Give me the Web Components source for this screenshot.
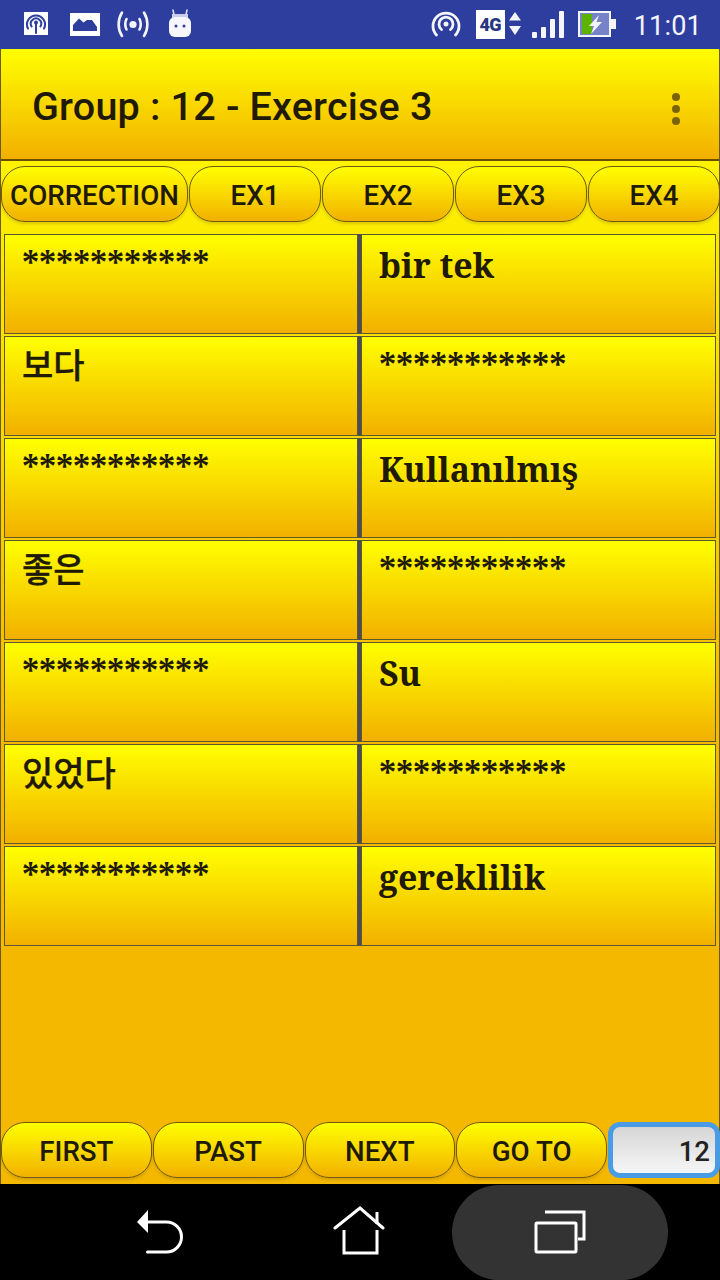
<!DOCTYPE html>
<html>
<head>
<meta charset="utf-8">
<title>Group 12 - Exercise 3</title>
<style>
  html, body { margin: 0; padding: 0; background: #000; }
  body { width: 720px; height: 1280px; overflow: hidden; font-family: Roboto, sans-serif; }
</style>
</head>
<body>
<phone-screen>
  <status-bar></status-bar>
  <app-bar title="Group : 12 - Exercise 3"></app-bar>
  <tab-row>
    <pill-button style="flex:none;width:187px">CORRECTION</pill-button>
    <pill-button>EX1</pill-button>
    <pill-button>EX2</pill-button>
    <pill-button>EX3</pill-button>
    <pill-button>EX4</pill-button>
  </tab-row>
  <word-table>
    <word-row left="***********" right="bir tek"></word-row>
    <word-row left="보다" right="***********"></word-row>
    <word-row left="***********" right="Kullanılmış"></word-row>
    <word-row left="좋은" right="***********"></word-row>
    <word-row left="***********" right="Su"></word-row>
    <word-row left="있었다" right="***********"></word-row>
    <word-row left="***********" right="gereklilik"></word-row>
  </word-table>
  <pager-row>
    <pill-button>FIRST</pill-button>
    <pill-button>PAST</pill-button>
    <pill-button>NEXT</pill-button>
    <pill-button>GO TO</pill-button>
    <page-input value="12"></page-input>
  </pager-row>
  <nav-bar></nav-bar>
</phone-screen>

<script>
class PhoneScreen extends HTMLElement {
  connectedCallback() {
    this.attachShadow({ mode: 'open' });
    this.shadowRoot.innerHTML = `
      <style>
        :host { display: flex; flex-direction: column; width: 720px; height: 1280px; }
        .content {
          flex: 1; display: flex; flex-direction: column; min-height: 0;
          border-left: 1px solid #6b5a10; border-right: 1px solid #6b5a10;
          background: linear-gradient(#ffff00 0, #f4b800 680px);
        }
      </style>
      <slot name="top"></slot>
      <div class="content"><slot></slot></div>
      <slot name="bottom"></slot>
    `;
    this.querySelector('status-bar').slot = 'top';
    this.querySelector('nav-bar').slot = 'bottom';
  }
}

class StatusBar extends HTMLElement {
  connectedCallback() {
    this.attachShadow({ mode: 'open' });
    this.shadowRoot.innerHTML = `
      <style>
        :host { display: block; height: 49px; background: #2d3e9f; color: #fff; flex: none; }
        .row { display: flex; align-items: center; height: 48px; }
        svg { display: block; flex: none; }
        .time { font: 400 27px Roboto, sans-serif; color: #f4f5fb; margin: 0 18px 0 18px; letter-spacing: .2px; line-height: 48px; position: relative; top: 2px; }
        .g { width: 29px; height: 29px; background: #fff; color: #27367f; display: flex; align-items: center; justify-content: center; font: 900 18px Roboto, sans-serif; letter-spacing: -.5px; }
      </style>
      <div class="row">
        <svg style="margin-left:24px" width="24" height="24" viewBox="0 0 24 24">
          <path fill="#fff" d="M0 0H24V23H0Z"/>
          <g fill="none" stroke="#2d3e9f" stroke-width="2" stroke-linecap="round">
            <path d="M4 16.500A9 9 0 1 1 20 16.500"/>
            <path d="M7.600 14.500A5.200 5.200 0 1 1 16.400 14.500"/>
            <path d="M12 11V21"/>
          </g>
          <circle cx="12" cy="10.500" r="2" fill="#2d3e9f"/>
        </svg>
        <svg style="margin-left:22px" width="30" height="24" viewBox="0 0 30 24">
          <path fill="#fff" d="M0 1H30V24H0Z"/>
          <path fill="#2d3e9f" d="M3 19V13L9 6.500L13.500 10.500L17 8L22 8L27 15V19Z"/>
        </svg>
        <svg style="margin-left:15px" width="36" height="28" viewBox="0 0 36 28">
          <g fill="none" stroke="#f4f5fb" stroke-width="2.600" stroke-linecap="round">
            <path d="M7 2.500C2.500 10 2.500 19 7 26"/>
            <path d="M11.500 9C9.800 12.500 9.800 16 11.500 19.500"/>
            <path d="M24.500 9C26.200 12.500 26.200 16 24.500 19.500"/>
            <path d="M29 2.500C33.500 10 33.500 19 29 26"/>
          </g>
          <circle cx="18" cy="14.500" r="3.600" fill="#f4f5fb"/>
        </svg>
        <svg style="margin-left:17px" width="24" height="30" viewBox="0 0 24 30">
          <path fill="none" stroke="#d8dbf0" stroke-width="1.600" stroke-linecap="round" d="M5 1L6.500 8M19 1L17.500 8"/>
          <path fill="#c9cdea" d="M4 5H20V10H4Z"/>
          <rect x="1" y="8" width="22" height="20" rx="6" fill="#f6f6fc"/>
          <circle cx="8" cy="17" r="1.500" fill="#2d3e9f"/>
          <circle cx="16" cy="17" r="1.500" fill="#2d3e9f"/>
        </svg>
        <div style="flex:1"></div>
        <svg width="30" height="30" viewBox="0 0 30 30" style="margin-right:15px">
          <g fill="none" stroke="#f4f5fb" stroke-width="2.800" stroke-linecap="round">
            <path d="M5.500 26A13 13 0 1 1 24.500 26"/>
            <path d="M10.500 20.500A7 7 0 1 1 19.500 20.500"/>
          </g>
          <circle cx="15" cy="15" r="2.500" fill="#f4f5fb"/>
        </svg>
        <div class="g">4G</div>
        <svg width="12" height="24" viewBox="0 0 12 24" style="margin:0 11px 0 4px">
          <path fill="#f4f5fb" d="M6 0L12 8.500H0Z"/><path fill="#f4f5fb" d="M0 14H12L6 23Z"/>
        </svg>
        <svg width="33" height="30" viewBox="0 0 33 30" style="margin-right:13px">
          <rect x="0" y="23" width="5" height="6" rx="1" fill="#f4f5fb"/>
          <rect x="9" y="18" width="5" height="11" rx="1" fill="#f4f5fb"/>
          <rect x="18" y="10" width="5" height="19" rx="1" fill="#f4f5fb"/>
          <rect x="27" y="2" width="5" height="27" rx="1" fill="#f4f5fb"/>
        </svg>
        <svg width="38" height="26" viewBox="0 0 38 26">
          <path fill="#f4f5fb" d="M0 0H33V8H38V18H33V26H0Z"/>
          <path fill="#7683c9" d="M2 2H31V24H2Z"/>
          <path fill="#5cb400" d="M4 3H14V23H4Z"/>
          <path fill="#f4f5fb" d="M21 4L11 15H16L13 23L24 11H18.500Z"/>
        </svg>
        <div class="time">11:01</div>
      </div>
    `;
  }
}

class AppBar extends HTMLElement {
  connectedCallback() {
    this.attachShadow({ mode: 'open' });
    this.shadowRoot.innerHTML = `
      <style>
        :host {
          display: flex; align-items: center; flex: none; box-sizing: border-box;
          height: 112px; padding: 4px 0 0 31px;
          background: linear-gradient(#ffff00, #f2b000);
          border-bottom: 2px solid #6b4e08;
          color: #201a05;
        }
        h1 { flex: 1; margin: 0; font: 500 39.500px Roboto, sans-serif; letter-spacing: .2px; }
        .dots { display: flex; flex-direction: column; gap: 4px; margin: 5px 39px 0 0; }
        .dots i { width: 8px; height: 8px; border-radius: 50%; background: #7a6405; }
      </style>
      <h1>${this.getAttribute('title')}</h1>
      <div class="dots"><i></i><i></i><i></i></div>
    `;
  }
}

class TabRow extends HTMLElement {
  connectedCallback() {
    this.attachShadow({ mode: 'open' });
    this.shadowRoot.innerHTML = `
      <style>
        :host { display: flex; flex: none; gap: 1px; padding: 5px 0 0 0; height: 57px; margin-right: -1px; }
        ::slotted(pill-button) { flex: 1 1 0; }
      </style>
      <slot></slot>
    `;
  }
}

class PillButton extends HTMLElement {
  connectedCallback() {
    this.attachShadow({ mode: 'open' });
    this.shadowRoot.innerHTML = `
      <style>
        :host {
          display: flex; align-items: center; justify-content: center; box-sizing: border-box;
          height: 56px; padding-top: 2px; border: 1px solid #6f5a10; border-radius: 24px;
          background: linear-gradient(#ffff00, #f2b000);
          font: 500 27.700px Roboto, sans-serif; color: #201a05;
          box-shadow: 0 2px 3px rgba(120, 90, 0, .25);
        }
      </style>
      <slot></slot>
    `;
  }
}

class WordTable extends HTMLElement {
  connectedCallback() {
    this.attachShadow({ mode: 'open' });
    this.shadowRoot.innerHTML = `
      <style>
        :host { display: flex; flex-direction: column; gap: 2px; padding: 11px 3px 0; flex: 1; }
      </style>
      <slot></slot>
    `;
  }
}

class WordRow extends HTMLElement {
  connectedCallback() {
    this.attachShadow({ mode: 'open' });
    const cell = text => {
      const korean = /[\uac00-\ud7a3]/.test(text);
      const stars = text[0] === '*';
      return `<div class="cell ${korean ? 'ko' : ''} ${stars ? 'stars' : ''}">${text}</div>`;
    };
    this.shadowRoot.innerHTML = `
      <style>
        :host { display: grid; grid-template-columns: 354px 355px; column-gap: 3px; height: 100px; background: #4a4a58; }
        .cell {
          box-sizing: border-box; height: 100px; padding: 7px 17px 0;
          border: 1px solid #5c5a2c;
          background: linear-gradient(#ffff00, #f2b000);
          color: #201a05;
          font: 700 33.900px/46px "Noto Serif", "Liberation Serif", serif;
          white-space: nowrap; overflow: hidden;
        }
        .cell.ko { font: 500 34px/46px "Noto Sans CJK KR", sans-serif; -webkit-text-stroke: .3px #201a05; padding-top: 4px; }
        .cell.stars { padding-top: 5px; }
      </style>
      ${cell(this.getAttribute('left'))}
      ${cell(this.getAttribute('right'))}
    `;
  }
}

class PagerRow extends HTMLElement {
  connectedCallback() {
    this.attachShadow({ mode: 'open' });
    this.shadowRoot.innerHTML = `
      <style>
        :host { display: flex; flex: none; gap: 1px; height: 62px; box-sizing: border-box; margin-right: -1px; }
        ::slotted(pill-button) { flex: none; width: 150.750px; }
      </style>
      <slot></slot>
    `;
  }
}

class PageInput extends HTMLElement {
  connectedCallback() {
    this.attachShadow({ mode: 'open' });
    this.shadowRoot.innerHTML = `
      <style>
        :host {
          display: flex; align-items: center; justify-content: flex-end; flex: none; box-sizing: border-box;
          width: 112px; height: 56px; padding: 2px 5px 0 0;
          border: 5px solid #4a9be6; border-radius: 12px;
          background: linear-gradient(#d6d6d6, #f6f6f6);
          font: 500 27.500px Roboto, sans-serif; color: #222;
        }
      </style>
      ${this.getAttribute('value')}
    `;
  }
}

class NavBar extends HTMLElement {
  connectedCallback() {
    this.attachShadow({ mode: 'open' });
    this.shadowRoot.innerHTML = `
      <style>
        :host { display: block; height: 96px; background: #000; position: relative; flex: none; }
        .pill { position: absolute; left: 452px; top: 1px; width: 216px; height: 95px; border-radius: 48px; background: #333; }
        svg { position: absolute; }
      </style>
      <div class="pill"></div>
      <svg style="left:135px;top:25px" width="52" height="46" viewBox="0 0 52 46" fill="none">
        <path fill="#fff" d="M2 13L13 1V24Z"/>
        <path stroke="#fff" stroke-width="3" stroke-linecap="round" d="M12 13H31.500A15 15 0 0 1 31.500 43H12.500"/>
      </svg>
      <svg style="left:333px;top:22px" width="54" height="52" viewBox="0 0 54 52" fill="none" stroke="#fff" stroke-width="3">
        <path stroke-linecap="round" d="M2 22L27 2L50 22"/>
        <path d="M11 24V47H44V24M44 18V6"/>
      </svg>
      <svg style="left:532px;top:26px" width="56" height="50" viewBox="0 0 56 50" fill="none" stroke="#fff" stroke-width="3">
        <path d="M13 2H52V29H46"/>
        <rect x="4" y="13" width="40" height="29" rx="1"/>
      </svg>
    `;
  }
}

customElements.define('phone-screen', PhoneScreen);
customElements.define('status-bar', StatusBar);
customElements.define('app-bar', AppBar);
customElements.define('tab-row', TabRow);
customElements.define('pill-button', PillButton);
customElements.define('word-table', WordTable);
customElements.define('word-row', WordRow);
customElements.define('pager-row', PagerRow);
customElements.define('page-input', PageInput);
customElements.define('nav-bar', NavBar);
</script>
</body>
</html>
